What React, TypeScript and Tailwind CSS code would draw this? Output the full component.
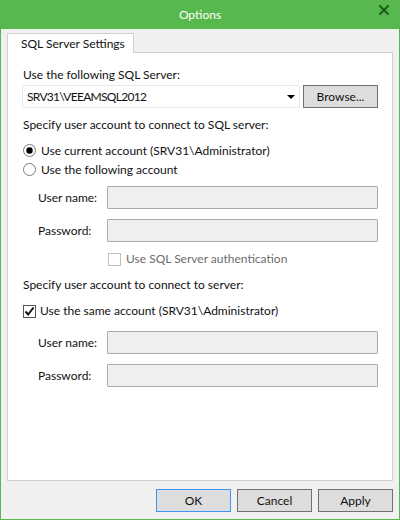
import React from "react";

function Field({ label }: { label: string }) {
  return (
    <div className="flex items-center h-[23px]">
      <span className="w-[85px] pl-[16px] shrink-0">{label}</span>
      <div className="w-[271px] h-[23px] bg-[#efefef] border border-[#acacac] rounded-[1px]" />
    </div>
  );
}

function Btn({ label, focus }: { label: string; focus?: boolean }) {
  return (
    <div className={"w-[75px] h-[23px] flex items-center justify-center bg-[#dddddd] border " + (focus ? "border-[#3c96f0]" : "border-[#707070]")}>
      {label}
    </div>
  );
}

export default function App() {
  return (
    <div className="w-[400px] h-[520px] flex flex-col bg-[#f0f0f0] border border-t-0 border-[#56b84d] text-[12px] leading-[16px] text-[#111] font-['Lato',sans-serif] overflow-hidden">
      <div className="h-[29px] -mx-px shrink-0 bg-[#56b84d] flex items-center justify-center relative text-white">
        <span>Options</span>
        <svg className="absolute left-[378px] top-[4px]" width="12" height="12" viewBox="0 0 12 12">
          <path d="M1.5 1.5 L10.5 10.5 M10.5 1.5 L1.5 10.5" stroke="#1e5a1a" strokeWidth="2" fill="none" />
        </svg>
      </div>
      <div className="flex-1 flex flex-col px-[6px] pt-[4px]">
        <div className="h-[20px] w-[127px] bg-white border border-b-0 border-[#d0d0d0] -mb-px relative z-10 pl-[13px] flex items-center">
          SQL Server Settings
        </div>
        <div className="h-[429px] bg-white border border-[#d0d0d0] px-[14px] pt-[14px] flex flex-col">
          <div className="pl-px">Use the following SQL Server:</div>
          <div className="flex gap-[3px] mt-[2px]">
            <div className="w-[278px] h-[23px] border border-[#e3e9ef] flex items-center justify-between pl-[4px] pr-[4px]">
              <span className="tracking-[-0.7px]">SRV31\VEEAMSQL2012</span>
              <svg width="8" height="4" viewBox="0 0 8 4"><path d="M0 0H8L4 4Z" fill="#000" /></svg>
            </div>
            <Btn label="Browse..." />
          </div>
          <div className="mt-[9px] pl-px">Specify user account to connect to SQL server:</div>
          <div className="mt-[8px] flex items-center gap-[5px] h-[19px] pl-px">
            <svg width="13" height="13" viewBox="0 0 13 13"><circle cx="6.5" cy="6.5" r="6" fill="#fff" stroke="#7a7a7a" /><circle cx="6.5" cy="6.5" r="3.2" fill="#000" /></svg>
            <span>Use current account (SRV31\Administrator)</span>
          </div>
          <div className="flex items-center gap-[5px] h-[19px] pl-px">
            <svg width="13" height="13" viewBox="0 0 13 13"><circle cx="6.5" cy="6.5" r="6" fill="#fff" stroke="#7a7a7a" /></svg>
            <span>Use the following account</span>
          </div>
          <div className="mt-[7px] flex flex-col gap-[10px]">
            <Field label="User name:" />
            <Field label="Password:" />
          </div>
          <div className="mt-[8px] flex items-center gap-[5px] h-[18px] pl-[86px] text-[#6d6d6d]">
            <div className="w-[13px] h-[13px] border border-[#c0c0c0]" />
            <span>Use SQL Server authentication</span>
          </div>
          <div className="mt-[9px] pl-px">Specify user account to connect to server:</div>
          <div className="mt-[9px] flex items-center gap-[4px] h-[18px] pl-px">
            <div className="w-[13px] h-[13px] border border-[#555] flex items-center justify-center">
              <svg width="11" height="11" viewBox="0 0 11 11"><path d="M1.5 5.5 L4.2 8.5 L9.5 1.5" stroke="#111" strokeWidth="2" fill="none" /></svg>
            </div>
            <span>Use the same account (SRV31\Administrator)</span>
          </div>
          <div className="mt-[11px] flex flex-col gap-[10px]">
            <Field label="User name:" />
            <Field label="Password:" />
          </div>
        </div>
        <div className="flex justify-end gap-[6px] mt-[8px]">
          <Btn label="OK" focus />
          <Btn label="Cancel" />
          <Btn label="Apply" />
        </div>
      </div>
    </div>
  );
}
